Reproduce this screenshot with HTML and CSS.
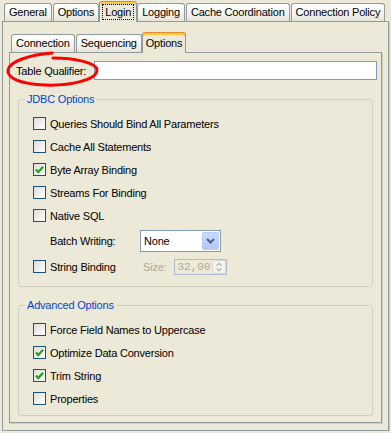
FILE: index.html
```html
<!DOCTYPE html>
<html lang="en">
<head>
  <meta charset="UTF-8">
  <meta name="viewport" content="width=device-width, initial-scale=1.0">
  <title>Login Options</title>
  <link rel="stylesheet" href="styles.css">
</head>
<body>
  <div class="window">
    <div class="tabs">
      <div class="tab">General</div>
      <div class="tab">Options</div>
      <div class="tab active"><span class="focus">Login</span></div>
      <div class="tab">Logging</div>
      <div class="tab">Cache Coordination</div>
      <div class="tab">Connection Policy</div>
    </div>

    <div class="panel outer-panel">
      <div class="tabs inner-tabs">
        <div class="tab">Connection</div>
        <div class="tab">Sequencing</div>
        <div class="tab active">Options</div>
      </div>

      <div class="panel inner-panel">
        <div class="field-row">
          <label class="field-label" for="qualifier">Table Qualifier:</label>
          <input class="text-field" id="qualifier" type="text">
        </div>

        <!-- red marker drawn over the label -->
        <svg class="annotation" width="110" height="42" viewBox="0 0 110 42">
          <path d="M49,9 C71,9 93,14 93,21 C93,31 66,37 41,36 C16,35 3,29 4,21 C5,13 24,6 48,4" fill="none" stroke="#f00" stroke-width="3" stroke-linecap="round"/>
        </svg>

        <fieldset class="group">
          <legend class="group-title">JDBC Options</legend>
          <div class="check-row"><span class="check"></span>Queries Should Bind All Parameters</div>
          <div class="check-row"><span class="check"></span>Cache All Statements</div>
          <div class="check-row"><span class="check checked"><svg width="9" height="9" viewBox="0 0 9 9"><polyline points="1,4.5 3.3,7 8,1.8" fill="none" stroke="#21a121" stroke-width="2.2"/></svg></span>Byte Array Binding</div>
          <div class="check-row"><span class="check"></span>Streams For Binding</div>
          <div class="check-row"><span class="check"></span>Native SQL</div>
          <div class="option-row">
            <span class="option-label">Batch Writing:</span>
            <div class="combo">
              <span class="combo-value">None</span>
              <span class="combo-button">
                <svg width="9" height="6" viewBox="0 0 9 6"><polyline points="1,1 4.5,4.5 8,1" fill="none" stroke="#4d6185" stroke-width="2"/></svg>
              </span>
            </div>
          </div>
          <div class="check-row">
            <span class="check"></span>
            <span class="inline-label">String Binding</span>
            <span class="disabled-label">Size:</span>
            <div class="spinner">
              <span class="spinner-value">32,00</span>
              <span class="spinner-buttons">
                <svg width="14" height="14" viewBox="0 0 14 14">
                  <rect x="0.5" y="0.5" width="13" height="13" rx="2" fill="#f3f2ec" stroke="#dcdad0"/>
                  <polyline points="4.5,5.5 7,3.5 9.5,5.5" fill="none" stroke="#bbb9ae" stroke-width="1.4"/>
                  <polyline points="4.5,8.5 7,10.5 9.5,8.5" fill="none" stroke="#bbb9ae" stroke-width="1.4"/>
                </svg>
              </span>
            </div>
          </div>
        </fieldset>

        <fieldset class="group group-advanced">
          <legend class="group-title">Advanced Options</legend>
          <div class="check-row"><span class="check"></span>Force Field Names to Uppercase</div>
          <div class="check-row"><span class="check checked"><svg width="9" height="9" viewBox="0 0 9 9"><polyline points="1,4.5 3.3,7 8,1.8" fill="none" stroke="#21a121" stroke-width="2.2"/></svg></span>Optimize Data Conversion</div>
          <div class="check-row"><span class="check checked"><svg width="9" height="9" viewBox="0 0 9 9"><polyline points="1,4.5 3.3,7 8,1.8" fill="none" stroke="#21a121" stroke-width="2.2"/></svg></span>Trim String</div>
          <div class="check-row"><span class="check"></span>Properties</div>
        </fieldset>
      </div>
    </div>
  </div>
</body>
</html>
```

FILE: styles.css
```css
body {
  margin: 0;
  background: #ece9d8;
  font-family: 'Liberation Sans', Arial, sans-serif;
  font-size: 11px;
  letter-spacing: -0.2px;
  color: #000;
}

.window {
  margin: 0 2px;
}

/* tab strips */
.tabs {
  display: flex;
  align-items: flex-end;
  gap: 1px;
  height: 21px;
  padding-left: 2px;
}

.tab {
  height: 18px;
  box-sizing: border-box;
  padding: 1px 4px 0;
  line-height: 15px;
  border: 1px solid #919b9c;
  border-bottom: none;
  border-radius: 3px 3px 0 0;
  background: linear-gradient(#ffffff, #f5f4ef 55%, #e6e4d9);
  white-space: nowrap;
}

.tab.active {
  position: relative;
  z-index: 1;
  height: 21px;
  margin: 0 -1px -1px;
  padding: 3px 3px 0;
  line-height: 15px;
  background: #ece9d8;
  border-top: 1px solid #e68b2c;
  box-shadow: inset 0 2px 0 #ffc73c;
}

.focus {
  display: inline-block;
  padding: 0 2px;
  line-height: 14px;
  outline: 1px dotted #000;
}

/* panels */
.panel {
  box-sizing: border-box;
  border: 1px solid #919b9c;
  background: #ece9d8;
}

.outer-panel {
  height: 410px;
  padding: 9px 6px 0;
  box-shadow: 1px 1px 0 #d2cfbf;
}

.inner-panel {
  position: relative;
  height: 371px;
  padding: 8px 4px 0 6px;
  box-shadow: 1px 1px 0 #d2cfbf;
}

.annotation {
  position: absolute;
  left: -6px;
  top: -4px;
}

/* table qualifier */
.field-row {
  display: flex;
  align-items: center;
  height: 19px;
}

.field-label {
  width: 78px;
}

.text-field {
  flex: 1;
  height: 19px;
  box-sizing: border-box;
  margin: 0;
  padding: 0 2px;
  border: 1px solid #7f9db9;
  background: #fff;
  font: inherit;
}

/* group boxes */
.group {
  margin: 12px 4px 0 2px;
  padding: 6px 8px 8px 6px;
  border: 1px solid #d0d0bf;
  border-radius: 3px;
  min-width: 0;
}

.group-advanced {
  margin-top: 11px;
  padding-bottom: 5px;
}

.group-title {
  padding: 0 2px;
  line-height: 14px;
  color: #0046d5;
}

.check-row {
  display: flex;
  align-items: center;
  gap: 4px;
  height: 23px;
  padding-left: 8px;
}

.check {
  display: flex;
  align-items: center;
  justify-content: center;
  width: 13px;
  height: 13px;
  box-sizing: border-box;
  border: 1px solid #1c5180;
  background: linear-gradient(135deg, #dcdcd7, #ffffff);
}

.check svg {
  display: block;
}

.option-row {
  display: flex;
  align-items: center;
  height: 28px;
  padding-left: 25px;
}

.option-label {
  width: 90px;
}

.combo {
  display: flex;
  align-items: center;
  width: 81px;
  height: 22px;
  box-sizing: border-box;
  padding: 1px;
  border: 1px solid #7f9db9;
  background: #fff;
}

.combo-value {
  flex: 1;
  padding-left: 2px;
}

.combo-button {
  display: flex;
  align-items: center;
  justify-content: center;
  width: 17px;
  height: 18px;
  box-sizing: border-box;
  border: 1px solid #b9cdf8;
  border-radius: 2px;
  background: linear-gradient(#ccdafc, #b3c7f5);
}

.inline-label {
  width: 89px;
}

.disabled-label {
  color: #aca899;
  margin-right: 4px;
}

.spinner {
  display: flex;
  align-items: center;
  width: 53px;
  height: 16px;
  box-sizing: border-box;
  border: 1px solid #b0bdcc;
}

.spinner-value {
  flex: 1;
  padding-left: 2px;
  font-family: 'Liberation Mono', 'Courier New', monospace;
  letter-spacing: 0;
  line-height: 14px;
  color: #aca899;
}

.spinner-buttons svg {
  display: block;
}
```
